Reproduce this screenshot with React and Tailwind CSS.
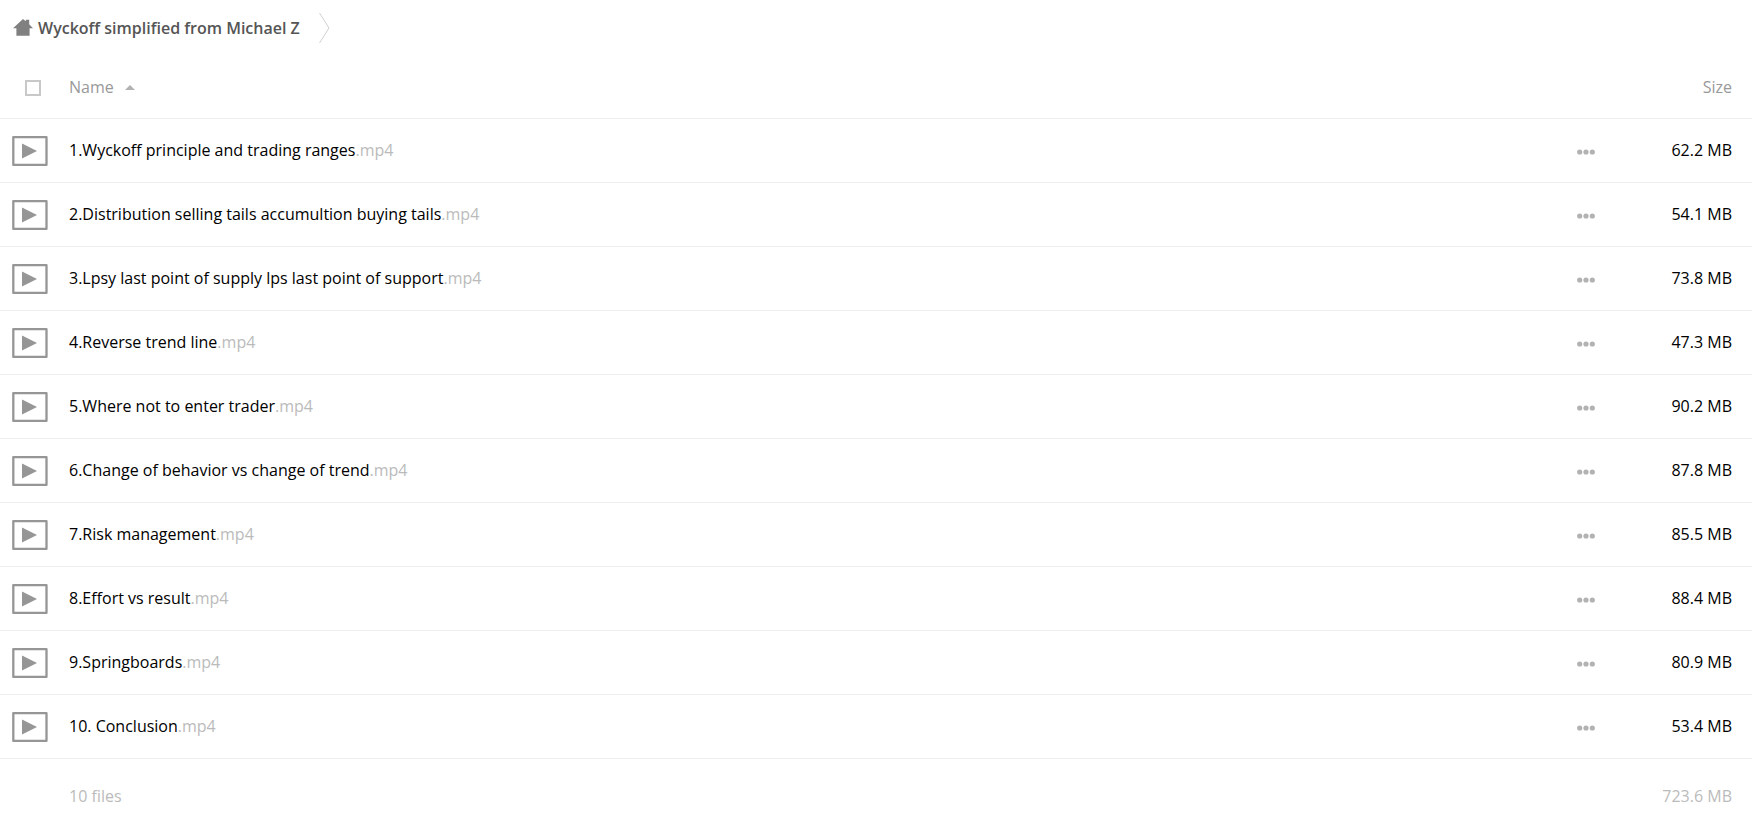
const files = [
  { name: "1.Wyckoff principle and trading ranges", ext: ".mp4", size: "62.2 MB" },
  { name: "2.Distribution selling tails accumultion buying tails", ext: ".mp4", size: "54.1 MB" },
  { name: "3.Lpsy last point of supply lps last point of support", ext: ".mp4", size: "73.8 MB" },
  { name: "4.Reverse trend line", ext: ".mp4", size: "47.3 MB" },
  { name: "5.Where not to enter trader", ext: ".mp4", size: "90.2 MB" },
  { name: "6.Change of behavior vs change of trend", ext: ".mp4", size: "87.8 MB" },
  { name: "7.Risk management", ext: ".mp4", size: "85.5 MB" },
  { name: "8.Effort vs result", ext: ".mp4", size: "88.4 MB" },
  { name: "9.Springboards", ext: ".mp4", size: "80.9 MB" },
  { name: "10. Conclusion", ext: ".mp4", size: "53.4 MB" },
];

function HomeIcon() {
  return (
    <svg width="20" height="18" viewBox="0 0 20 18" fill="#808080" aria-hidden="true">
      <path d="M10 0L12.8 2.3V0.8H16.2V5.2L20 9.2H16.6V16.8H3.4V9.2H0z" />
    </svg>
  );
}

function VideoIcon() {
  return (
    <svg width="36" height="30" viewBox="0 0 36 30" aria-hidden="true">
      <rect x="1.3" y="1" width="33.2" height="28" rx="0.4" fill="none" stroke="#969696" strokeWidth="2.3" />
      <path d="M10 7.5v15L25 15z" fill="#969696" />
    </svg>
  );
}

function DotsIcon() {
  return (
    <svg width="18" height="6" viewBox="0 0 18 6" fill="#b2b2b2" aria-hidden="true">
      <circle cx="2.7" cy="3" r="2.6" />
      <circle cx="9" cy="3" r="2.6" />
      <circle cx="15.3" cy="3" r="2.6" />
    </svg>
  );
}

function Breadcrumb() {
  return (
    <nav className="flex h-14 items-center pl-[13px]">
      <a href="#" className="flex items-center gap-[5px] font-semibold text-[#555555]">
        <HomeIcon />
        Wyckoff simplified from Michael Z
      </a>
      <svg className="ml-[19px]" width="11" height="30" viewBox="0 0 11 30" fill="none" stroke="#d0d0d0" aria-hidden="true">
        <path d="M0.5 0L10 15L0.5 30" />
      </svg>
    </nav>
  );
}

function FileRow({ file }) {
  return (
    <tr className="h-16 border-b border-[#eeeeee] hover:bg-gray-50">
      <td className="pt-0.5 pl-3">
        <VideoIcon />
      </td>
      <td>
        <a href="#">
          {file.name}
          <span className="text-[#bbbbbb]">{file.ext}</span>
        </a>
      </td>
      <td>
        <button aria-label={"Actions for " + file.name} className="flex h-6 items-center pt-1 cursor-pointer">
          <DotsIcon />
        </button>
      </td>
      <td className="pr-5 text-right">{file.size}</td>
    </tr>
  );
}

function App() {
  return (
    <div className="min-h-screen bg-white font-['Open_Sans',sans-serif] text-base text-black">
      <Breadcrumb />
      <table className="w-full table-fixed border-collapse">
        <colgroup>
          <col className="w-[69px]" />
          <col />
          <col className="w-[63px]" />
          <col className="w-28" />
        </colgroup>
        <thead>
          <tr className="h-[62px] border-b border-[#eeeeee] text-[#999999]">
            <th className="pt-0.5 pl-[25px]">
              <input
                type="checkbox"
                aria-label="Select all"
                className="block size-4 appearance-none border-2 border-[#c8c8c8] bg-white checked:bg-[#c8c8c8]"
              />
            </th>
            <th className="text-left font-normal">
              <button className="flex items-center gap-[11px] cursor-pointer">
                Name
                <svg className="mt-0.5" width="10" height="5" viewBox="0 0 10 5" fill="#b2b2b2" aria-hidden="true">
                  <path d="M0 5L5 0L10 5z" />
                </svg>
              </button>
            </th>
            <th></th>
            <th className="pr-5 text-right font-normal">
              <button className="cursor-pointer">Size</button>
            </th>
          </tr>
        </thead>
        <tbody>
          {files.map((file) => (
            <FileRow key={file.name} file={file} />
          ))}
        </tbody>
        <tfoot>
          <tr className="h-[68px] text-[#bbbbbb]">
            <td></td>
            <td className="pt-2">{files.length} files</td>
            <td></td>
            <td className="pt-2 pr-5 text-right">723.6 MB</td>
          </tr>
        </tfoot>
      </table>
    </div>
  );
}

export default App;
